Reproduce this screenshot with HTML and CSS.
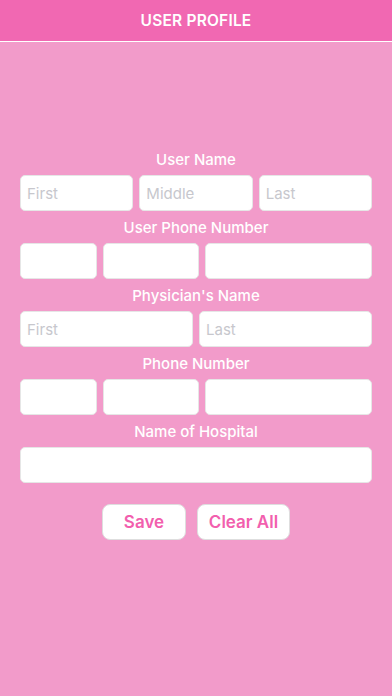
FILE: index.html
```html
<!doctype html>
<html lang="en">
  <head>
    <meta charset="UTF-8" />
    <meta name="viewport" content="width=device-width, initial-scale=1.0" />
    <title>User Profile</title>
    <link rel="stylesheet" href="styles.css">
  </head>
  <body>
    <header class="nav-bar">
      <h1 class="nav-title">USER PROFILE</h1>
    </header>

    <main class="profile-form">
      <label class="field-label">User Name</label>
      <div class="field-row three-equal">
        <input class="text-field" type="text" placeholder="First" />
        <input class="text-field" type="text" placeholder="Middle" />
        <input class="text-field" type="text" placeholder="Last" />
      </div>

      <label class="field-label">User Phone Number</label>
      <div class="field-row phone">
        <input class="text-field" type="tel" />
        <input class="text-field" type="tel" />
        <input class="text-field" type="tel" />
      </div>

      <label class="field-label">Physician's Name</label>
      <div class="field-row two-equal">
        <input class="text-field" type="text" placeholder="First" />
        <input class="text-field" type="text" placeholder="Last" />
      </div>

      <label class="field-label">Phone Number</label>
      <div class="field-row phone">
        <input class="text-field" type="tel" />
        <input class="text-field" type="tel" />
        <input class="text-field" type="tel" />
      </div>

      <label class="field-label">Name of Hospital</label>
      <div class="field-row">
        <input class="text-field" type="text" />
      </div>

      <div class="button-row">
        <button class="action-button save">Save</button>
        <button class="action-button clear">Clear All</button>
      </div>
    </main>
  </body>
</html>
```

FILE: styles.css
```css
* {
  margin: 0;
  padding: 0;
  box-sizing: border-box;
}

body {
  font-family: Inter, "Noto Sans", Roboto, sans-serif;
  background-color: #f29bca;
  min-height: 100vh;
}

.nav-bar {
  height: 42px;
  background-color: #f168b2;
  border-bottom: 1px solid #fff;
  display: flex;
  align-items: center;
  justify-content: center;
}

.nav-title {
  font-size: 15.5px;
  font-weight: 600;
  color: #fff;
  letter-spacing: 0.2px;
}

.profile-form {
  display: flex;
  flex-direction: column;
  padding: 101px 20px 0;
}

.field-label {
  height: 32px;
  display: flex;
  align-items: center;
  justify-content: center;
  font-size: 15px;
  font-weight: 500;
  color: #fff;
}

.field-row {
  display: grid;
  grid-template-columns: 1fr;
  gap: 6px;
}

.field-row.three-equal {
  grid-template-columns: 1fr 1fr 1fr;
}

.field-row.two-equal {
  grid-template-columns: 1fr 1fr;
}

.field-row.phone {
  grid-template-columns: 77fr 96fr 167fr;
}

.text-field {
  min-width: 0;
  height: 36px;
  padding: 0 6px;
  border: 1px solid #e6e6e6;
  border-radius: 5px;
  background-color: #fff;
  font-family: inherit;
  font-size: 15px;
  color: #333;
  outline: none;
}

.text-field::placeholder {
  color: #c7c7cd;
}

.button-row {
  display: flex;
  justify-content: center;
  gap: 11px;
  margin-top: 21px;
}

.action-button {
  height: 36px;
  border: 1px solid #dedede;
  border-radius: 8px;
  background-color: #fff;
  color: #f25fae;
  font-family: inherit;
  font-size: 17px;
  font-weight: 600;
  cursor: pointer;
}

.action-button.save {
  width: 84px;
}

.action-button.clear {
  width: 93px;
}
```
